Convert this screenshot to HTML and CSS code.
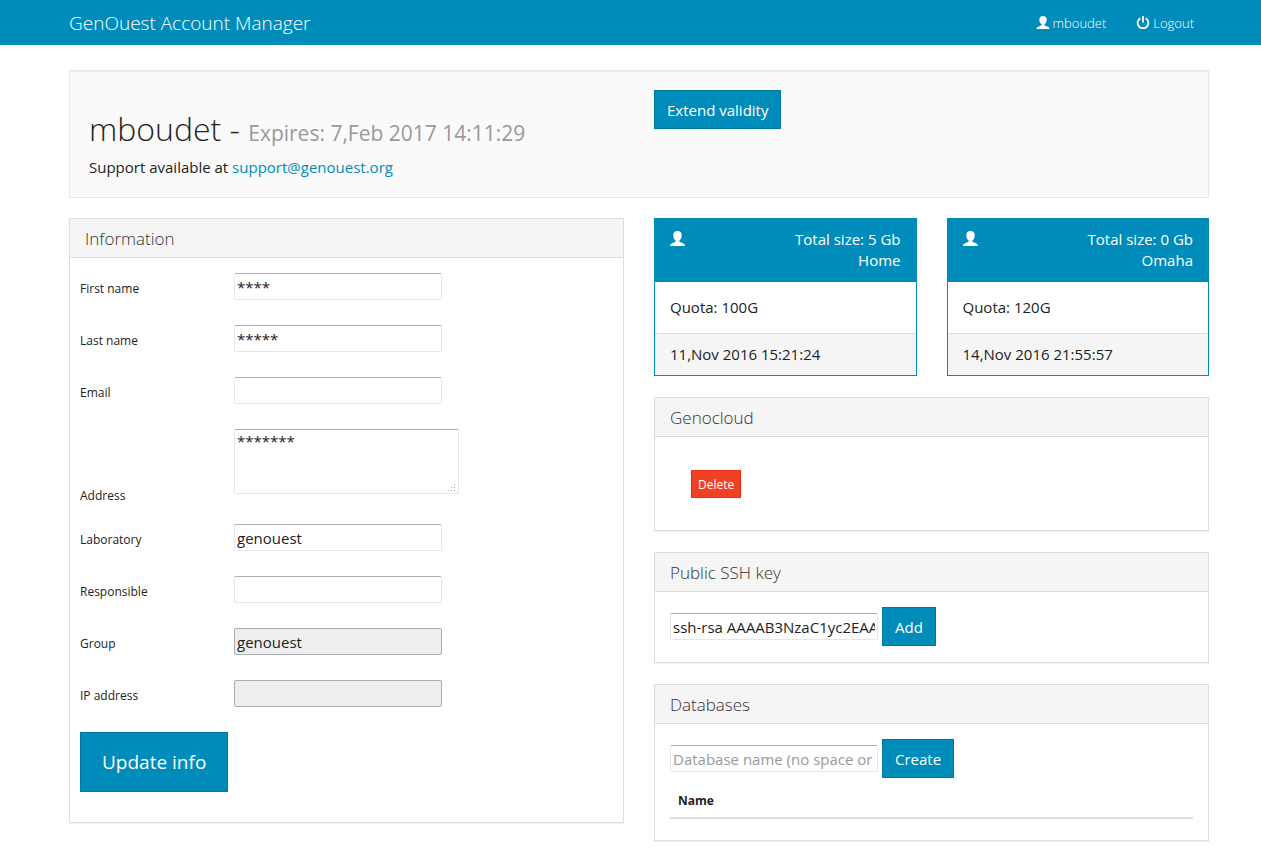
FILE: index.html
```html
<!DOCTYPE html>
<html lang="en">
<head>
<meta charset="utf-8">
<title>GenOuest Account Manager</title>
<link rel="stylesheet" href="styles.css">
</head>
<body>
<svg class="defs" width="0" height="0" aria-hidden="true">
  <symbol id="user" viewBox="0 0 16 16"><path d="M8 0C5.200 0 3.500 1.600 3.500 4c0 1.500.2 2.600.6 3.600.4 1 1 1.800 1.900 2.400v1.300c-.4.700-1.800 1-3.200 1.500C1.200 13.400 0 14 0 16h16c0-2-1.200-2.600-2.800-3.200-1.400-.5-2.800-.8-3.200-1.500V10c.9-.6 1.500-1.400 1.900-2.400.4-1 .6-2.100.6-3.600C12.500 1.600 10.800 0 8 0z"/></symbol>
  <symbol id="power" viewBox="0 0 16 16"><path d="M4.800 2.700a6.600 6.600 0 1 0 6.400 0M8 0v8" fill="none" stroke="currentColor" stroke-width="2.200"/></symbol>
</svg>
<nav class="navbar">
  <a class="brand" href="#">GenOuest Account Manager</a>
  <div class="nav-links">
    <a href="#"><svg class="icon"><use href="#user"/></svg>mboudet</a>
    <a href="#"><svg class="icon"><use href="#power"/></svg>Logout</a>
  </div>
</nav>
<main class="container">
  <header class="well">
    <div>
      <h1>mboudet - <small>Expires: 7,Feb 2017 14:11:29</small></h1>
      <p>Support available at <a href="#">support@genouest.org</a></p>
    </div>
    <div><button class="btn" type="button">Extend validity</button></div>
  </header>
  <div class="columns">
    <section class="panel">
      <h2 class="panel-heading">Information</h2>
      <form class="info-form">
        <div class="row"><label for="first">First name</label><input id="first" type="text" value="****"></div>
        <div class="row"><label for="last">Last name</label><input id="last" type="text" value="*****"></div>
        <div class="row"><label for="email">Email</label><input id="email" type="text"></div>
        <div class="row row-area"><label for="address">Address</label>
          <div class="area"><textarea id="address">*******</textarea>
            <svg class="grip" viewBox="0 0 8 8" aria-hidden="true"><path d="M6 0h1v1H6zM3 3h1v1H3zM6 3h1v1H6zM0 6h1v1H0zM3 6h1v1H3zM6 6h1v1H6z"/></svg></div></div>
        <div class="row"><label for="lab">Laboratory</label><input id="lab" type="text" value="genouest"></div>
        <div class="row"><label for="resp">Responsible</label><input id="resp" type="text"></div>
        <div class="row"><label for="group">Group</label><input id="group" type="text" value="genouest" disabled></div>
        <div class="row"><label for="ip">IP address</label><input id="ip" type="text" disabled></div>
        <button class="btn btn-large" type="button">Update info</button>
      </form>
    </section>
    <div class="side">
      <div class="cards">
        <section class="card">
          <div class="card-heading"><svg class="icon"><use href="#user"/></svg><div>Total size: 5 Gb<br>Home</div></div>
          <div class="card-body">Quota: 100G</div>
          <div class="card-footer">11,Nov 2016 15:21:24</div>
        </section>
        <section class="card">
          <div class="card-heading"><svg class="icon"><use href="#user"/></svg><div>Total size: 0 Gb<br>Omaha</div></div>
          <div class="card-body">Quota: 120G</div>
          <div class="card-footer">14,Nov 2016 21:55:57</div>
        </section>
      </div>
      <section class="panel">
        <h2 class="panel-heading">Genocloud</h2>
        <div class="cloud"><button class="btn btn-danger" type="button">Delete</button></div>
      </section>
      <section class="panel">
        <h2 class="panel-heading">Public SSH key</h2>
        <form class="inline-form"><input type="text" aria-label="Public SSH key" value="ssh-rsa AAAAB3NzaC1yc2EAAAADAQABAAABAQ"><button class="btn" type="button">Add</button></form>
      </section>
      <section class="panel">
        <h2 class="panel-heading">Databases</h2>
        <form class="inline-form"><input type="text" aria-label="Database name" placeholder="Database name (no space or accents)"><button class="btn" type="button">Create</button></form>
        <table class="table"><thead><tr><th>Name</th></tr></thead></table>
      </section>
    </div>
  </div>
</main>
</body>
</html>
```

FILE: styles.css
```css
* { box-sizing: border-box; }
body {
  margin: 0;
  background: #fff;
  color: #222;
  font: 15px/21px "Open Sans", "Noto Sans", sans-serif;
}
h1, h2, p { margin: 0; }
a { color: #008cba; text-decoration: none; }
.defs { position: absolute; }
.icon { width: 15px; height: 15px; fill: currentColor; flex: none; }

.navbar {
  display: flex;
  justify-content: space-between;
  align-items: center;
  height: 45px;
  padding: 1px 67px 0 69px;
  background: #008cba;
}
.navbar a { color: #fff; font-weight: 300; }
.navbar .brand { font-size: 19px; }
.nav-links { display: flex; gap: 30px; font-size: 13px; }
.nav-links a { display: flex; align-items: center; gap: 3px; }
.nav-links .icon { width: 14px; height: 13px; margin-bottom: 2px; }

.container { margin: 25px 52px 16px 69px; }
.well {
  display: grid;
  grid-template-columns: 1fr 1fr;
  column-gap: 30px;
  margin-bottom: 20px;
  padding: 19px 0 19px 19px;
  border: 1px solid #e8e8e8;
  background: #fafafa;
  box-shadow: inset 0 1px 1px rgba(0, 0, 0, .05);
}
.well { padding-right: 19px; }
.well h1 {
  margin: 21px 0 10px;
  font-size: 32px;
  line-height: 36px;
  font-weight: 300;
}
.well small { font-size: 21px; line-height: 21px; font-weight: 400; color: #999; }

.btn {
  height: 39px;
  padding: 1px 12px 0;
  border: 1px solid #0079a1;
  background: #008cba;
  color: #fff;
  font: inherit;
  cursor: pointer;
}
.btn-large { height: 60px; padding: 0 21px; font-size: 19px; }
.btn-danger {
  height: 28px;
  padding: 0 6px;
  border-color: #ea2f10;
  background: #f04124;
  font-size: 12px;
}

.columns { display: grid; grid-template-columns: 1fr 1fr; gap: 30px; align-items: start; }
.side { display: grid; gap: 21px; }
.panel {
  border: 1px solid #ddd;
  background: #fff;
  box-shadow: 0 1px 1px rgba(0, 0, 0, .05);
}
.panel-heading {
  padding: 11px 15px 9px;
  border-bottom: 1px solid #ddd;
  background: #f5f5f5;
  color: #333;
  font-size: 17px;
  line-height: 18px;
  font-weight: 300;
}

input, textarea {
  margin: 0;
  padding: 1px 2px;
  border: 1px solid #e3e6eb;
  border-top-color: #abadb3;
  border-radius: 2px;
  background: #fff;
  color: #222;
  font: inherit;
}
input { width: 208px; height: 27px; }
input:disabled { border-color: #abadb3; background: #eee; }
input::placeholder { color: #999; }
textarea { display: block; width: 225px; height: 65px; resize: none; overflow: hidden; }

.info-form { padding: 15px 10px 30px; }
.row { display: grid; grid-template-columns: 154px 1fr; margin-bottom: 25px; }
.row label { padding-top: 9px; font-size: 12px; line-height: 14px; }
.row-area { margin-bottom: 21px; }
.row-area label { align-self: end; }
.area { position: relative; width: 225px; padding-bottom: 9px; }
.grip { position: absolute; right: 3px; bottom: 11px; width: 8px; height: 8px; fill: #aaa; }

.cards { display: grid; grid-template-columns: 1fr 1fr; gap: 30px; }
.card { border: 1px solid #008cba; }
.card-heading {
  display: flex;
  justify-content: space-between;
  padding: 10px 15px 11px;
  background: #008cba;
  color: #fff;
  text-align: right;
}
.card-heading .icon { margin-top: 2px; }
.card-body { padding: 15px; }
.card-footer { padding: 10px 15px; border-top: 1px solid #ddd; background: #f5f5f5; }

.cloud { display: flex; padding: 33px 36px 32px; }
.inline-form { display: flex; align-items: center; gap: 4px; padding: 15px 15px 16px; }
.table { width: calc(100% - 30px); margin: -10px 15px 21px; border-collapse: collapse; }
.table th {
  padding: 8px;
  border-bottom: 2px solid #ddd;
  font-size: 12px;
  line-height: 17px;
  text-align: left;
}
```
